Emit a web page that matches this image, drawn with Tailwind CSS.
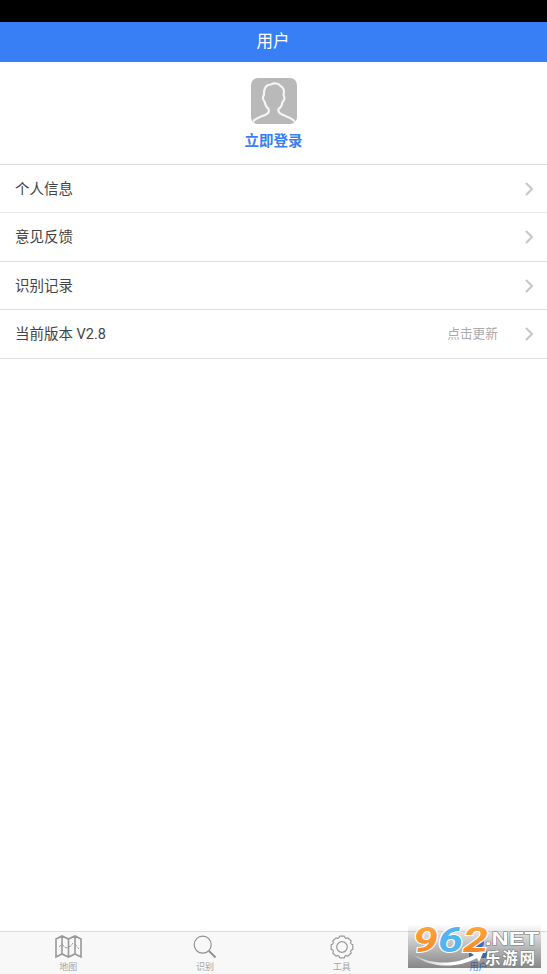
<!DOCTYPE html>
<html lang="zh-CN">
<head>
<meta charset="utf-8">
<title>用户</title>
<script src="https://cdn.jsdelivr.net/npm/@tailwindcss/browser@4"></script>
</head>
<body class="bg-white">
<div class="w-[547px] h-[974px] flex flex-col overflow-hidden bg-white text-[#444] font-['Roboto','Noto_Sans_CJK_SC',sans-serif]">
  <div class="h-[22px] shrink-0 bg-black"></div>
  <header class="h-10 shrink-0 bg-[#387ff5] text-white text-[16.5px] leading-10 pr-[1px] text-center">用户</header>
  <section class="h-[102px] shrink-0 flex flex-col items-center pt-4">
    <svg class="w-[46px] h-[46px] shrink-0" viewBox="0 0 46 46" fill="none">
      <rect width="46" height="46" rx="7" fill="#b9b9b9"/>
      <path d="M2 44C4 40 11 38.500 15 36.500Q19 34.500 17.500 31C15 29 14 26.500 13.500 23.500C11.500 21.500 11.500 18.500 13 17C12.500 10.500 15 6.500 20 6.500C23 4.500 28 5.500 29.500 8C33.500 10 33.500 13 32.500 17C34 20 33.500 22.500 31.500 24C31 27 30 29.500 27.500 31Q26.500 34.500 31 36.500C36 39 42 40 44 44" stroke="#f5f5f5" stroke-width="2.100"/>
    </svg>
    <a class="mt-[7px] text-[14.5px] leading-[21px] font-bold text-[#387ff5]">立即登录</a>
  </section>
  <ul class="shrink-0 text-[14.5px] leading-[46px] border-b border-[#e3e3e3]">
    <li class="h-12 border-t border-[#ddd] pl-[15px] pr-[14px] flex items-center"><span class="grow pt-[2px]">个人信息</span>
      <svg class="w-2 h-[14px]" viewBox="0 0 8 14" fill="none" stroke="#c7c7c7" stroke-width="2"><path d="M1 1L7 7L1 13"/></svg></li>
    <li class="h-[49px] border-t border-[#e6e6e6] pl-[15px] pr-[14px] flex items-center"><span class="grow pt-[2px]">意见反馈</span>
      <svg class="w-2 h-[14px]" viewBox="0 0 8 14" fill="none" stroke="#c7c7c7" stroke-width="2"><path d="M1 1L7 7L1 13"/></svg></li>
    <li class="h-12 border-t border-[#ddd] pl-[15px] pr-[14px] flex items-center"><span class="grow pt-[2px]">识别记录</span>
      <svg class="w-2 h-[14px]" viewBox="0 0 8 14" fill="none" stroke="#c7c7c7" stroke-width="2"><path d="M1 1L7 7L1 13"/></svg></li>
    <li class="h-[49px] border-t border-[#ddd] pl-[15px] pr-[14px] flex items-center"><span class="grow pt-[2px]">当前版本 V2.8</span>
      <span class="text-[12.700px] text-[#aaa] mr-[27px]">点击更新</span>
      <svg class="w-2 h-[14px]" viewBox="0 0 8 14" fill="none" stroke="#c7c7c7" stroke-width="2"><path d="M1 1L7 7L1 13"/></svg></li>
  </ul>
  <main class="grow"></main>
  <nav class="relative h-[43px] shrink-0 border-t border-[#dcdcdc] bg-[#f8f8f8] grid grid-cols-4 text-[9px] leading-3 text-[#a5a5a5]">
    <div class="flex flex-col items-center pt-[3px]">
      <svg class="w-[27px] h-6" viewBox="0 0 27 24" fill="none" stroke="#999" stroke-width="1.600">
        <path d="M1 4L7 1L13.500 4L20 1L26 4V22L20 19L13.500 22L7 19L1 22ZM7 1V19M13.500 4V22M20 1V19"/>
        <path d="M4 12L7 9.500L11 13L16 11L18 8M20 9L24 14" stroke-width="1" stroke-dasharray="3 1"/>
      </svg>
      <span class="mt-[2px]">地图</span>
    </div>
    <div class="flex flex-col items-center pt-[3px]">
      <svg class="w-6 h-6" viewBox="0 0 24 24" fill="none" stroke="#929292"><circle cx="9.700" cy="9.700" r="8.500" stroke-width="1.200"/><path d="M16 16L22.500 22.500" stroke-width="1.900"/></svg>
      <span class="mt-[2px]">识别</span>
    </div>
    <div class="flex flex-col items-center pt-[3px]">
      <svg class="w-6 h-6" viewBox="0 0 24 24" fill="none" stroke="#999" stroke-width="1.200" stroke-linejoin="round">
        <path d="M9.700 1.200H14.300Q15.100 4.500 18 2.800L21.200 6Q19.500 8.900 22.800 9.700V14.300Q19.500 15.100 21.200 18L18 21.200Q15.100 19.500 14.300 22.800H9.700Q8.900 19.500 6 21.200L2.800 18Q4.500 15.100 1.200 14.300V9.700Q4.500 8.900 2.800 6L6 2.800Q8.900 4.500 9.700 1.200Z"/><circle cx="12" cy="12" r="5.300"/>
      </svg>
      <span class="mt-[2px]">工具</span>
    </div>
    <div class="flex flex-col items-center pt-[3px] text-[#387ff5]">
      <svg class="w-6 h-6" viewBox="0 0 24 24" fill="#387ff5"><circle cx="12" cy="8" r="5"/><path d="M2 23V19Q2 16 6 16H18Q22 16 22 19V23Z"/></svg>
      <span class="mt-[2px]">用户</span>
    </div>
    <svg class="absolute left-[408px] -top-[8px] w-[133px] h-11 overflow-visible" viewBox="0 0 133 44">
      <defs>
        <linearGradient id="shade" x1="0" y1="0" x2="0" y2="1"><stop stop-color="#444" stop-opacity="0"/><stop offset=".5" stop-color="#444" stop-opacity=".33"/><stop offset="1" stop-color="#444" stop-opacity=".63"/></linearGradient>
        <linearGradient id="orange" x1="0" y1="0" x2="0" y2="1"><stop stop-color="#ffad42"/><stop offset="1" stop-color="#f57e20"/></linearGradient>
        <linearGradient id="swoosh"><stop stop-color="#fff" stop-opacity=".4"/><stop offset=".5" stop-color="#fff"/><stop offset="1" stop-color="#fff"/></linearGradient>
      </defs>
      <rect width="133" height="44" fill="url(#shade)"/>
      <g font-family="Roboto, sans-serif" font-weight="700" font-style="italic" font-size="35" stroke="#fff" stroke-width="2" paint-order="stroke">
        <text x="5" y="28" textLength="75" lengthAdjust="spacingAndGlyphs"><tspan fill="url(#orange)">9</tspan><tspan fill="#52b5ef">6</tspan><tspan fill="url(#orange)">2</tspan></text>
      </g>
      <path d="M6 31C24 41 48 41 66 31L63 29L76 27L71 38L69 34C49 45 21 44 6 31Z" fill="url(#swoosh)"/>
      <g fill="#fff" stroke="#777" stroke-width="1" paint-order="stroke" font-weight="700">
        <text x="77" y="21" font-family="Liberation Sans, sans-serif" font-size="18.500" textLength="54" lengthAdjust="spacingAndGlyphs">.NET</text>
        <text x="77" y="39.500" font-family="Noto Sans CJK SC, sans-serif" font-size="15.500" textLength="50">乐游网</text>
      </g>
    </svg>
  </nav>
</div>
</body>
</html>
